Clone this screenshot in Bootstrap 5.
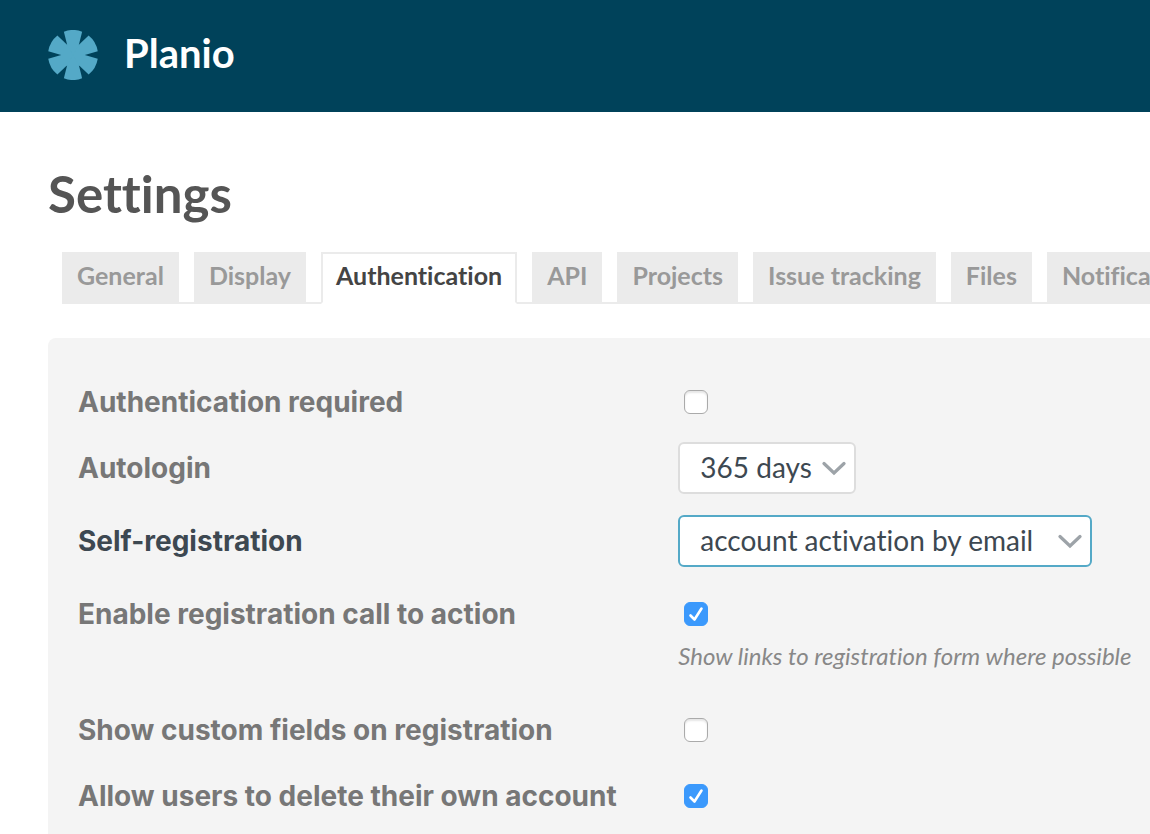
<!DOCTYPE html>
<html lang="en">
<head>
<meta charset="utf-8">
<meta name="viewport" content="width=device-width, initial-scale=1">
<title>Settings - Planio</title>
<link href="https://cdn.jsdelivr.net/npm/bootstrap@5.3.0/dist/css/bootstrap.min.css" rel="stylesheet">
<style>
  body { font-family: Lato, "Open Sans", sans-serif; font-variant-ligatures: none; color: #555; background: #fff; }
  .site-bar { background: #00425a; height: 112px; padding: 0 48px; }
  .site-bar .navbar-brand { font-size: 40px; line-height: 48px; gap: 26px; padding: 0 0 2px; }
  .page-title { font-size: 51px; line-height: 56px; color: #555; padding: 54px 48px 30px; }
  .settings-tabs { margin-left: 62px; border-bottom: 2px solid #ebebeb; gap: 15px; }
  .settings-tabs .nav-link { font-size: 25px; line-height: 26px; font-weight: 700; color: #999; background: #ebebeb; border: 2px solid #ebebeb; border-radius: 0; padding: 8px 13px 14px; margin-bottom: -2px; white-space: nowrap; }
  .settings-tabs .nav-link.active { color: #444; background: #fff; border-color: #ebebeb #ebebeb #fff; }
  .panel { background: #f4f4f4; border-radius: 8px 0 0 0; margin: 34px 0 0 48px; padding: 31px 0 31px 30px; }
  .setting { display: grid; grid-template-columns: 56fr 44fr; padding: 21px 0; }
  .setting-select { padding: 7px 0 14px; align-items: center; }
  .setting-label { font-family: Inter, sans-serif; font-size: 28px; line-height: 24px; font-weight: 700; color: #777; white-space: nowrap; }
  .setting-label.current { color: #3d4851; }
  .setting .form-check-input { width: 24px; height: 24px; margin: 0 0 0 6px; display: block; border: 1px solid #aaa; border-radius: 6px; background-color: #fff; box-shadow: inset 0 2px 2px #0000001a; }
  .setting .form-check-input:checked { background-color: #3b99fc; border-color: #3b99fc; box-shadow: none; background-size: 24px 24px; background-image: url("data:image/svg+xml,%3csvg xmlns='http://www.w3.org/2000/svg' viewBox='0 0 24 24'%3e%3cpath d='M6.5 13.5 10.5 17.5 17.5 6.5' fill='none' stroke='%23fff' stroke-width='2.6' stroke-linecap='round' stroke-linejoin='round'/%3e%3c/svg%3e"); }
  .setting .form-select { height: 52px; font-size: 28px; line-height: 36px; font-variant-ligatures: none; padding: 5px 36px 7px 20px; color: #3d4851; border: 2px solid #ddd; border-radius: 6px; background-position: right 8px center; background-size: 24px 24px; background-image: url("data:image/svg+xml,%3csvg xmlns='http://www.w3.org/2000/svg' viewBox='0 0 24 24'%3e%3cpath d='M2 7.5 12 17 22 7.5' fill='none' stroke='%239da3a8' stroke-width='3.2' stroke-linecap='round' stroke-linejoin='miter'/%3e%3c/svg%3e"); }
  .setting .form-select.current { border-color: #54a9c7; }
  .select-days { width: 178px; }
  .select-mode { width: 414px; }
  .hint { font-size: 24px; line-height: 30px; color: #888; margin-top: 15px; margin-bottom: 5px; white-space: nowrap; }
</style>
</head>
<body>
<header class="navbar site-bar">
  <a class="navbar-brand d-flex align-items-center fw-bold text-white m-0" href="#">
    <svg width="50" height="50" viewBox="-25 -25 50 50" fill="#54a9c7" aria-hidden="true">
      <defs><path id="petal" d="M0 0-5.9-10.2-9.1-23.3A25 25 0 0 1 9.1-23.3L5.9-10.2Z"/></defs>
      <circle r="11.5"/>
      <use href="#petal"/><use href="#petal" transform="rotate(60)"/><use href="#petal" transform="rotate(120)"/>
      <use href="#petal" transform="rotate(180)"/><use href="#petal" transform="rotate(240)"/><use href="#petal" transform="rotate(300)"/>
    </svg>
    <span class="pb-1">Planio</span>
  </a>
</header>
<main class="overflow-hidden">
  <h1 class="page-title fw-bold m-0">Settings</h1>
  <nav class="nav flex-nowrap settings-tabs" aria-label="Settings sections">
    <a class="nav-link" href="#">General</a>
    <a class="nav-link" href="#">Display</a>
    <a class="nav-link active" aria-current="page" href="#">Authentication</a>
    <a class="nav-link" href="#">API</a>
    <a class="nav-link" href="#">Projects</a>
    <a class="nav-link" href="#">Issue tracking</a>
    <a class="nav-link" href="#">Files</a>
    <a class="nav-link" href="#">Notifications</a>
  </nav>
  <form class="panel">
    <div class="setting">
      <label class="setting-label" for="login-required">Authentication required</label>
      <div><input class="form-check-input" type="checkbox" id="login-required"></div>
    </div>
    <div class="setting setting-select">
      <label class="setting-label" for="autologin">Autologin</label>
      <div><select class="form-select select-days" id="autologin"><option>365 days</option></select></div>
    </div>
    <div class="setting setting-select">
      <label class="setting-label current" for="self-registration">Self-registration</label>
      <div><select class="form-select select-mode current" id="self-registration"><option>account activation by email</option></select></div>
    </div>
    <div class="setting">
      <label class="setting-label" for="call-to-action">Enable registration call to action</label>
      <div>
        <input class="form-check-input" type="checkbox" id="call-to-action" checked aria-describedby="cta-hint">
        <p class="hint fst-italic" id="cta-hint">Show links to registration form where possible</p>
      </div>
    </div>
    <div class="setting">
      <label class="setting-label" for="custom-fields">Show custom fields on registration</label>
      <div><input class="form-check-input" type="checkbox" id="custom-fields"></div>
    </div>
    <div class="setting">
      <label class="setting-label" for="delete-account">Allow users to delete their own account</label>
      <div><input class="form-check-input" type="checkbox" id="delete-account" checked></div>
    </div>
  </form>
</main>
<script src="https://cdn.jsdelivr.net/npm/bootstrap@5.3.0/dist/js/bootstrap.bundle.min.js"></script>
</body>
</html>
